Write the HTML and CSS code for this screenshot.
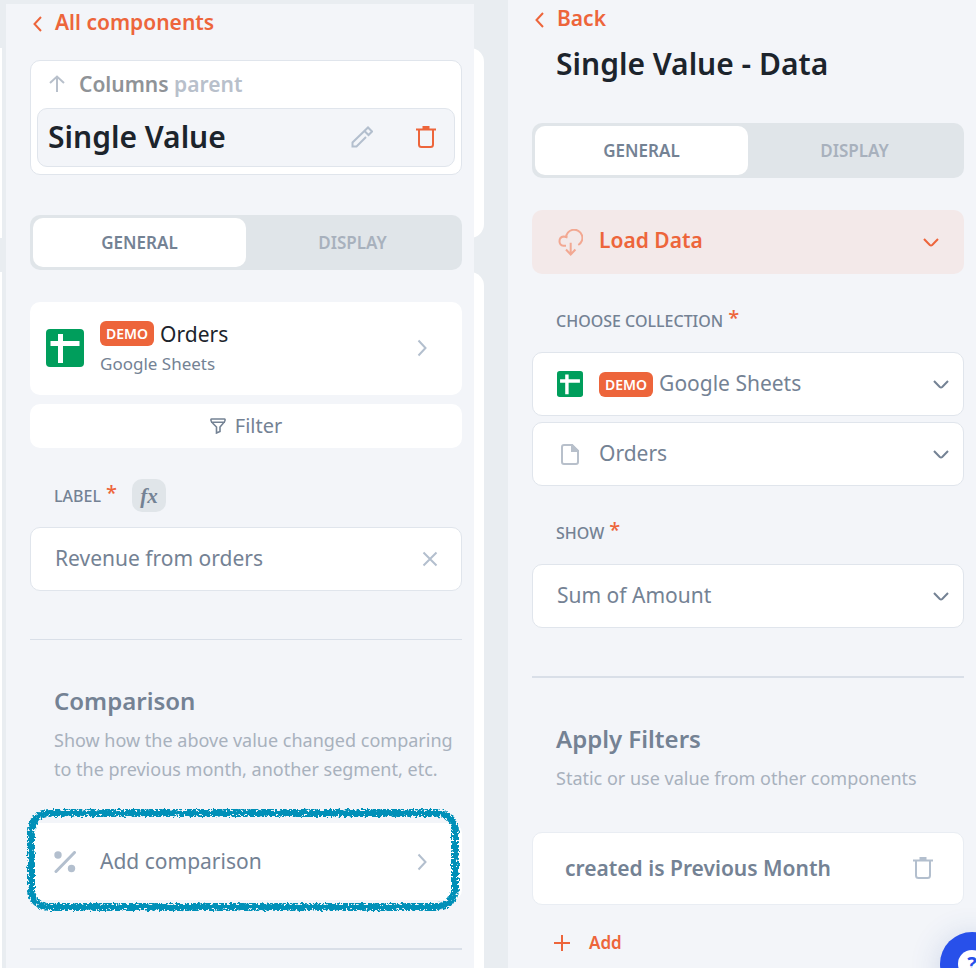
FILE: index.html
```html
<!DOCTYPE html>
<html lang="en">
<head>
<meta charset="utf-8">
<title>Single Value</title>
<link rel="stylesheet" href="styles.css">
</head>
<body>
<svg class="defs" aria-hidden="true">
  <defs>
    <filter id="crayon" x="-5%" y="-10%" width="110%" height="120%">
      <feTurbulence type="fractalNoise" baseFrequency="0.35" numOctaves="1" seed="7" result="noise"/>
      <feDisplacementMap in="SourceGraphic" in2="noise" scale="4" xChannelSelector="R" yChannelSelector="G" result="rough"/>
      <feTurbulence type="fractalNoise" baseFrequency="0.5" numOctaves="2" seed="12" result="speck"/>
      <feColorMatrix in="speck" type="matrix" values="0 0 0 0 0  0 0 0 0 0  0 0 0 0 0  0 0 12 0 -4.800" result="grain"/>
      <feComposite in="rough" in2="grain" operator="in"/>
    </filter>
    <filter id="crayon-core" x="-5%" y="-10%" width="110%" height="120%">
      <feTurbulence type="fractalNoise" baseFrequency="0.25" numOctaves="1" seed="3" result="noise"/>
      <feDisplacementMap in="SourceGraphic" in2="noise" scale="5" xChannelSelector="R" yChannelSelector="G"/>
    </filter>
    <symbol id="chevron-left" viewBox="0 0 9 16"><path d="M8 1 1.500 8 8 15"/></symbol>
    <symbol id="chevron-right" viewBox="0 0 10 18"><path d="M1.500 1.500 8.500 9 1.500 16.500"/></symbol>
    <symbol id="chevron-down" viewBox="0 0 16 9"><path d="M1 1 6.800 7Q8 8 9.200 7L15 1"/></symbol>
    <symbol id="trash" viewBox="0 0 20 22"><path d="M0 3.500H20M3 3.500V18.500Q3 21 5.500 21H14.500Q17 21 17 18.500V3.500"/><path d="M6.500 1.500H13.500" stroke-width="3"/></symbol>
    <symbol id="sheets" viewBox="0 0 38 38"><rect width="38" height="38" rx="4" fill="#009e5c"/><path d="M4.500 14.500H33.500M14.500 5V34" stroke="#fff" stroke-width="5" fill="none"/></symbol>
  </defs>
</svg>

<main class="screen">
  <div class="stage">
    <div class="canvas" aria-hidden="true">
      <div class="canvas-card canvas-card-first"></div>
      <div class="canvas-card canvas-card-second"></div>
    </div>
    <section class="panel panel-component">
      <a class="back" href="#"><svg class="icon back-icon"><use href="#chevron-left"/></svg><span>All components</span></a>

      <div class="hierarchy">
        <a class="parent" href="#">
          <svg class="icon up-icon" viewBox="0 0 16 18"><path d="M8 17V1.500M1 8 8 1.500 15 8"/></svg>
          <span>Columns <span class="parent-tag">parent</span></span>
        </a>
        <div class="current">
          <h1 class="title">Single Value</h1>
          <button class="icon-button" type="button" aria-label="Rename">
            <svg class="icon pencil-icon" viewBox="0 0 22 22"><path d="M15 11 5.500 20.500H1.500V16.500L17 1.500 21 5.500 17.500 9 13.500 5"/></svg>
          </button>
          <button class="icon-button danger" type="button" aria-label="Delete"><svg class="icon trash-icon"><use href="#trash"/></svg></button>
        </div>
      </div>

      <div class="tabs" role="tablist">
        <button class="tab active" type="button" role="tab" aria-selected="true">GENERAL</button>
        <button class="tab" type="button" role="tab" aria-selected="false">DISPLAY</button>
      </div>

      <button class="source" type="button">
        <svg class="sheets-icon"><use href="#sheets"/></svg>
        <span class="source-text">
          <span class="source-name"><span class="badge">DEMO</span>Orders</span>
          <span class="source-type">Google Sheets</span>
        </span>
        <svg class="icon chevron-right"><use href="#chevron-right"/></svg>
      </button>
      <button class="filter" type="button">
        <svg class="icon filter-icon" viewBox="0 0 16 16"><path d="M1.500 1H14.500Q15.200 1 15 2.500T13 5.500L10 9V13.500L6.500 15V9L3 5.500Q1.200 4 1 2.500T1.500 1ZM1 4.200H15"/></svg>Filter
      </button>

      <div class="label-row">
        <label class="label" for="label-text">LABEL<span class="required">*</span></label>
        <button class="fx" type="button">fx</button>
      </div>
      <div class="field">
        <input class="control" id="label-text" type="text" value="Revenue from orders">
        <button class="icon-button clear" type="button" aria-label="Clear"><svg class="icon clear-icon" viewBox="0 0 16 16"><path d="M1.500 1.500 14.500 14.500M14.500 1.500 1.500 14.500"/></svg></button>
      </div>

      <hr class="rule rule-thin">

      <h2 class="heading">Comparison</h2>
      <p class="hint">Show how the above value changed comparing to the previous month, another segment, etc.</p>
      <div class="highlighted">
        <button class="comparison" type="button">
          <svg class="percent-icon" viewBox="0 0 22 22"><path d="M2 20.500 20.500 1.500" fill="none" stroke="#b3bfce" stroke-width="3" stroke-linecap="round"/><circle cx="4" cy="4" r="3.700" fill="#b3bfce"/><circle cx="17.500" cy="17.500" r="3.700" fill="#b3bfce"/></svg>
          <span class="comparison-text">Add comparison</span>
          <svg class="icon chevron-right"><use href="#chevron-right"/></svg>
        </button>
        <svg class="marker" aria-hidden="true">
          <rect class="marker-edge" x="7" y="7" rx="18" filter="url(#crayon)"/>
          <rect class="marker-core" x="7" y="7" rx="18" filter="url(#crayon-core)"/>
        </svg>
      </div>
      <hr class="rule">
    </section>
  </div>

  <section class="panel panel-data">
    <a class="back" href="#"><svg class="icon back-icon"><use href="#chevron-left"/></svg><span>Back</span></a>
    <h1 class="title title-data">Single Value - Data</h1>

    <div class="tabs" role="tablist">
      <button class="tab active" type="button" role="tab" aria-selected="true">GENERAL</button>
      <button class="tab" type="button" role="tab" aria-selected="false">DISPLAY</button>
    </div>

    <button class="load" type="button">
      <svg class="icon cloud-icon" viewBox="0 0 26 27"><path d="M10.500 8.500C9.500 8 8 7.500 6.500 7.500A4.700 4.700 0 0 0 6.500 16.800H9M9 9A8.200 8.200 0 1 1 21.300 16M13.700 13.700V25M9 20.500 13.700 25.500 18.400 20.500"/></svg>
      <span class="load-text">Load Data</span>
      <svg class="icon chevron-down"><use href="#chevron-down"/></svg>
    </button>

    <label class="label" for="collection">CHOOSE COLLECTION<span class="required">*</span></label>
    <div class="field field-first">
      <span class="field-icon"><svg class="sheets-icon sheets-small"><use href="#sheets"/></svg></span>
      <span class="badge">DEMO</span>
      <select class="control" id="collection"><option>Google Sheets</option></select>
      <svg class="icon chevron-down"><use href="#chevron-down"/></svg>
    </div>
    <div class="field">
      <span class="field-icon"><svg class="icon page-icon" viewBox="0 0 18 21"><path d="M3 1H11L17 7V18Q17 20 15 20H3Q1 20 1 18V3Q1 1 3 1Z"/><path d="M11 1V7H17Z" fill="currentColor"/></svg></span>
      <select class="control" aria-label="Table"><option>Orders</option></select>
      <svg class="icon chevron-down"><use href="#chevron-down"/></svg>
    </div>

    <label class="label" for="show">SHOW<span class="required">*</span></label>
    <div class="field">
      <select class="control" id="show"><option>Sum of Amount</option></select>
      <svg class="icon chevron-down"><use href="#chevron-down"/></svg>
    </div>

    <hr class="rule">

    <h2 class="heading">Apply Filters</h2>
    <p class="hint">Static or use value from other components</p>
    <div class="condition">
      <span class="condition-text">created is Previous Month</span>
      <button class="icon-button" type="button" aria-label="Remove filter"><svg class="icon trash-icon"><use href="#trash"/></svg></button>
    </div>
    <button class="add" type="button"><svg class="icon plus-icon" viewBox="0 0 16 16"><path d="M8 0V16M0 8H16"/></svg>Add</button>
  </section>

  <button class="help" type="button" aria-label="Help"><span class="help-mark">?</span></button>
</main>
</body>
</html>
```
FILE: styles.css
```css
* { box-sizing: border-box; }

:root {
  --accent: #ed653b;
  --text: #1c242c;
  --muted: #748294;
  --soft: #a8b1bd;
  --icon: #b3bfce;
  --line: #e0e5ec;
  --panel: #f3f5f9;
  --canvas: #e9edf1;
}

body {
  margin: 0;
  background: var(--canvas);
  color: var(--muted);
  font: 400 21px/32px "Noto Sans", sans-serif;
}

h1, h2, p { margin: 0; }
a { color: inherit; text-decoration: none; }
button, input, select { font: inherit; color: inherit; }
button { margin: 0; padding: 0; border: 0; background: none; text-align: left; }
.defs { position: absolute; width: 0; height: 0; }

.icon {
  flex: none;
  fill: none;
  stroke: currentColor;
  stroke-width: 2;
}

.screen {
  position: relative;
  display: grid;
  grid-template-columns: minmax(0, 1fr) minmax(0, 1fr);
  gap: 34px;
  min-height: 100vh;
  padding-left: 6px;
  overflow: hidden;
}

.stage { position: relative; display: flex; padding-top: 4px; }
.canvas { position: absolute; inset: 0 -10px 0 -6px; overflow: hidden; }
.canvas-card { position: absolute; left: -20px; right: 0; border-radius: 14px; background: #fff; }
.canvas-card-first { top: 48px; height: 190px; }
.canvas-card-second { top: 272px; bottom: -20px; }

.panel {
  display: flex;
  flex: 1;
  flex-direction: column;
  min-width: 0;
  padding: 2px 12px 0 24px;
  background: var(--panel);
}
.panel-component { position: relative; box-shadow: -4px 0 0 var(--canvas); }

.back {
  display: flex;
  align-items: center;
  height: 32px;
  padding-left: 3px;
  color: var(--accent);
  font-weight: 600;
}
.back-icon { width: 9px; height: 16px; margin: 4px 13px 0 0; }

.title { color: var(--text); font-size: 30px; font-weight: 600; line-height: 40px; }
.title-data { margin: 10px 0 0 24px; }

.hierarchy {
  margin-top: 22px;
  padding: 0 6px 7px;
  border: 1px solid var(--line);
  border-radius: 10px;
  background: #fff;
}
.parent {
  display: flex;
  align-items: center;
  gap: 14px;
  height: 47px;
  padding: 0 0 2px 12px;
  color: #8f9397;
  font-weight: 600;
}
.parent-tag, .up-icon { color: #b8c0cb; }
.up-icon { width: 16px; height: 18px; }
.current {
  display: flex;
  align-items: center;
  height: 59px;
  padding: 0 18px 2px 10px;
  border: 1px solid var(--line);
  border-radius: 10px;
  background: var(--panel);
}
.current .title { flex: 1; }
.icon-button { display: flex; color: var(--icon); }
.pencil-icon { width: 22px; height: 22px; }
.danger { margin-left: 43px; color: var(--accent); }
.trash-icon { width: 20px; height: 22px; }

.tabs {
  display: grid;
  grid-template-columns: 1fr 1fr;
  height: 55px;
  margin-top: 40px;
  padding: 3px;
  border-radius: 10px;
  background: #e0e5e9;
}
.title-data + .tabs { margin-top: 39px; }
.tab {
  border-radius: 10px;
  color: var(--soft);
  font-size: 17px;
  font-weight: 600;
  text-align: center;
}
.tab.active { background: #fff; color: var(--muted); }

.source {
  display: flex;
  align-items: center;
  height: 93px;
  margin-top: 32px;
  padding: 0 35px 2px 16px;
  border-radius: 10px;
  background: #fff;
}
.sheets-icon { flex: none; width: 38px; height: 38px; }
.sheets-small { width: 26px; height: 26px; }
.source-text { flex: 1; padding-left: 16px; }
.source-name { display: flex; align-items: center; gap: 6px; color: var(--text); }
.source-type { display: block; font-size: 17px; line-height: 28px; }
.badge {
  height: 25px;
  padding: 0 6px;
  border-radius: 6px;
  background: var(--accent);
  color: #fff;
  font-size: 14px;
  font-weight: 600;
  line-height: 25px;
}
.chevron-right { width: 10px; height: 18px; color: var(--icon); }

.filter {
  display: flex;
  align-items: center;
  justify-content: center;
  gap: 9px;
  height: 44px;
  margin-top: 9px;
  border-radius: 10px;
  background: #fff;
  font-size: 20px;
}
.filter-icon { width: 16px; height: 16px; stroke-width: 1.6; }

.label-row { display: flex; align-items: center; gap: 15px; height: 33px; margin-top: 31px; }
.label { display: flex; padding-left: 24px; font-size: 16px; font-weight: 500; }
.required { margin-left: 5px; color: var(--accent); font-size: 20px; line-height: 26px; }
.fx {
  width: 34px;
  height: 33px;
  border-radius: 10px;
  background: #e0e5e9;
  font: italic 700 21px/30px "Liberation Serif", serif;
  text-align: center;
}

.field {
  display: flex;
  align-items: center;
  height: 64px;
  padding: 0 14px 0 24px;
  border: 1px solid var(--line);
  border-radius: 10px;
  background: #fff;
}
.label-row + .field { margin-top: 15px; padding-right: 23px; }
.control {
  flex: 1;
  min-width: 0;
  height: 62px;
  padding: 0 0 3px;
  border: 0;
  outline: 0;
  background: none;
  appearance: none;
}
.clear-icon { width: 16px; height: 16px; }
.chevron-down { width: 16px; height: 9px; }
.field-icon { display: flex; justify-content: center; width: 26px; margin-right: 16px; }
.field .badge { margin-right: 6px; }
.page-icon { width: 18px; height: 21px; color: #b8c0cb; }
.panel-data > .label { height: 32px; margin: 31px 0 15px; }
.field-first { margin-bottom: 6px; }

.rule { width: 100%; height: 2px; margin: 48px 0 0; border: 0; background: #d9dfe8; }
.rule-thin { height: 1px; }

.heading { margin: 44px 0 0 24px; font-size: 24px; font-weight: 600; line-height: 34px; }
.hint { margin: 8px 0 0 24px; color: var(--soft); font-size: 18px; line-height: 29px; }

.highlighted { position: relative; display: flex; margin-top: 39px; }
.comparison {
  display: flex;
  flex: 1;
  align-items: center;
  height: 77px;
  padding: 0 35px 0 24px;
  border-radius: 10px;
  background: #fff;
}
.percent-icon { flex: none; width: 22px; height: 22px; }
.comparison-text { flex: 1; padding: 0 0 2px 24px; }
.marker {
  position: absolute;
  top: -17px;
  left: -6px;
  width: calc(100% + 6px);
  height: 109px;
  pointer-events: none;
}
.marker rect { width: calc(100% - 14px); height: 94px; fill: none; stroke: #0090b8; }
.marker-edge { stroke-width: 8; }
.marker-core { stroke-width: 4; }

.load {
  display: flex;
  align-items: center;
  height: 64px;
  margin-top: 32px;
  padding: 0 25px;
  border-radius: 10px;
  background: #f3e9e9;
  color: var(--accent);
  font-weight: 600;
}
.cloud-icon { width: 26px; height: 27px; color: #f2a892; }
.load-text { flex: 1; padding: 0 0 4px 16px; }

.condition {
  display: flex;
  align-items: center;
  justify-content: space-between;
  height: 73px;
  margin-top: 39px;
  padding: 0 30px 2px 32px;
  border: 1px solid #e9edf3;
  border-radius: 10px;
  background: #fff;
  font-weight: 600;
}
.add {
  display: flex;
  align-items: center;
  gap: 19px;
  height: 32px;
  margin: 22px 0 0 22px;
  color: var(--accent);
  font-size: 17px;
  font-weight: 600;
}
.plus-icon { width: 16px; height: 16px; }

.help {
  position: absolute;
  right: -28px;
  bottom: -28px;
  display: grid;
  place-items: center;
  width: 64px;
  height: 64px;
  border-radius: 50%;
  background: #2850ea;
  box-shadow: 0 4px 32px rgba(40, 80, 160, 0.2);
}
.help-mark {
  width: 28px;
  height: 28px;
  border-radius: 50%;
  background: #fff;
  color: #2850ea;
  font-size: 20px;
  font-weight: 700;
  line-height: 28px;
  text-align: center;
}
```
